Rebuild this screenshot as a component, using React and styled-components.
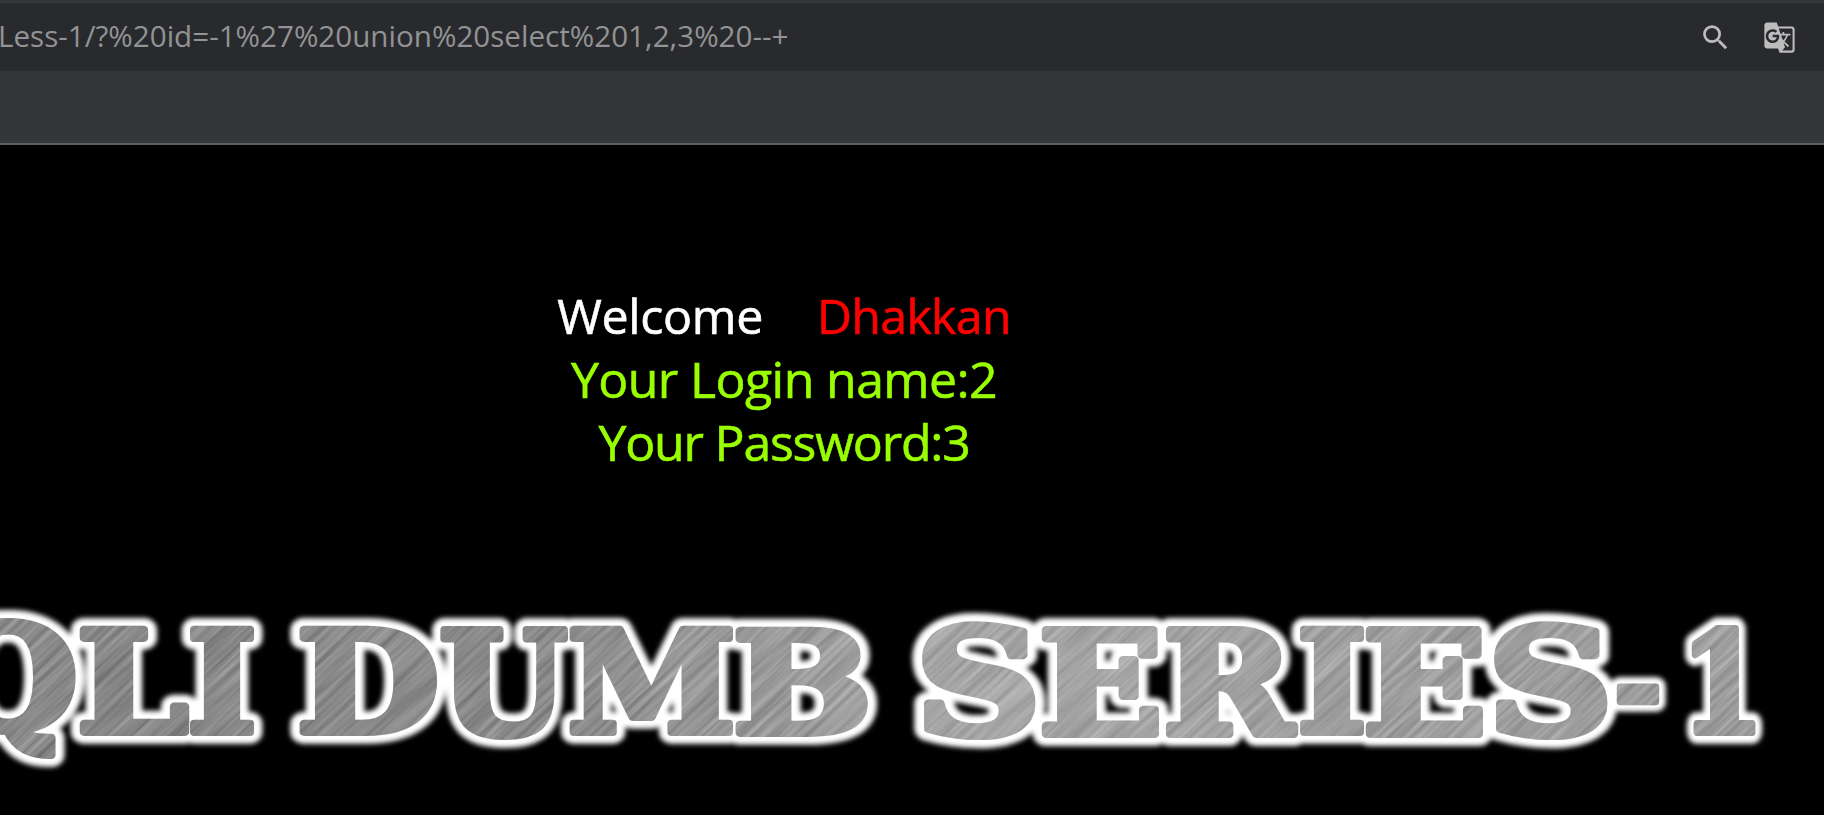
import React from 'react';
import styled, { createGlobalStyle } from 'styled-components';
import { MdSearch, MdGTranslate } from 'react-icons/md';

const GlobalStyle = createGlobalStyle`
  body {
    margin: 0;
    background: #000;
    font-family: "Open Sans", "Noto Sans", sans-serif;
  }
`;

const Screen = styled.div`
  width: 1824px;
  height: 815px;
  overflow: hidden;
  display: flex;
  flex-direction: column;
  background: #000;
`;

const BrowserChrome = styled.header`
  box-sizing: border-box;
  flex: none;
  height: 145px;
  padding-top: 3px;
  background: #35363a;
  border-bottom: 2px solid #5f6063;
`;

const AddressBar = styled.div`
  box-sizing: border-box;
  height: 68px;
  padding-right: 28px;
  display: flex;
  align-items: center;
  justify-content: space-between;
  background: #292a2d;
`;

const Url = styled.span`
  margin-left: -2px;
  padding-bottom: 2px;
  font-size: 29.6px;
  line-height: 64px;
  white-space: pre;
  color: #929394;
`;

const Actions = styled.div`
  display: flex;
  align-items: center;
  gap: 31px;
  color: #bdbdbd;
`;

const Page = styled.main`
  flex: 1;
  display: flex;
  flex-direction: column;
`;

const Message = styled.section`
  width: 1568px;
  height: 306px;
  margin-top: 139px;
  display: flex;
  flex-direction: column;
  align-items: center;
`;

const Line = styled.div`
  display: flex;
  gap: 54px;
  height: 63.5px;
  font-size: ${(p) => p.$size}px;
  line-height: 63.5px;
  letter-spacing: ${(p) => p.$spacing || 0}px;
  white-space: pre;
  color: #99ff00;
  -webkit-text-stroke: 0.6px;
`;

const Word = styled.span`
  color: ${(p) => p.$color};
  letter-spacing: ${(p) => p.$spacing}px;
`;

const BannerArt = styled.svg`
  display: block;
  flex: none;
`;

const Lettering = styled.g`
  font-family: "DejaVu Serif", serif;
  font-weight: bold;
  font-size: 143px;
  stroke-linejoin: round;
`;

/* Glyph extents in thousandths of the em: left, right, above and below baseline */
const EXTENTS = {
  Q: [36, 828, 742, 186],
  L: [45, 682, 729, 0],
  I: [45, 422, 729, 0],
  D: [45, 822, 729, 0],
  U: [31, 851, 729, 14],
  M: [36, 1068, 729, 0],
  B: [45, 795, 729, 0],
  S: [60, 670, 742, 14],
  E: [45, 715, 729, 0],
  R: [45, 838, 729, 0],
  '-': [45, 370, 340, -194],
  1: [112, 612, 742, 0],
};

/* Letter and its box on the banner: left, right, top, bottom */
const LETTERS = [
  ['Q', -60, 75, 619, 760],
  ['L', 80, 189, 626, 736],
  ['I', 190, 254, 626, 736],
  ['D', 300, 436, 626, 736],
  ['U', 440, 568, 626, 740],
  ['M', 569, 734, 626, 736],
  ['B', 736, 868, 626, 737],
  ['S', 922, 1036, 621, 740],
  ['E', 1042, 1159, 626, 738],
  ['R', 1166, 1298, 626, 738],
  ['I', 1300, 1364, 626, 736],
  ['E', 1366, 1483, 626, 738],
  ['S', 1494, 1608, 621, 740],
  ['-', 1615, 1661, 682, 707],
  ['1', 1690, 1758, 625, 736],
];

const EM = 143;
const EDGE = 4;

function fit([char, left, right, top, bottom]) {
  const [l, r, a, d] = EXTENTS[char].map((v) => (v * EM) / 1000);
  const sx = (right - left - EDGE * 2) / (r - l);
  const sy = (bottom - top - EDGE * 2) / (a + d);
  const x = left + EDGE - l * sx;
  const y = top + EDGE + a * sy;
  return `translate(${x.toFixed(2)} ${y.toFixed(2)}) scale(${sx.toFixed(4)} ${sy.toFixed(4)})`;
}

function Banner() {
  return (
    <BannerArt width="1824" height="225" viewBox="0 590 1824 225">
      <defs>
        <filter id="glow" filterUnits="userSpaceOnUse" x="-80" y="590" width="1904" height="225">
          <feGaussianBlur stdDeviation="2.8" />
        </filter>
        <filter id="brushed" filterUnits="userSpaceOnUse" x="-800" y="-200" width="2800" height="2600" colorInterpolationFilters="sRGB">
          <feTurbulence type="fractalNoise" baseFrequency="0.009 0.22" numOctaves="3" seed="4" />
          <feColorMatrix values="0.3 0 0 0 0.42  0.3 0 0 0 0.42  0.3 0 0 0 0.42  0 0 0 0 1" />
        </filter>
        <linearGradient id="sheen" gradientUnits="userSpaceOnUse" x1="0" y1="0" x2="1824" y2="0">
          <stop offset="0" stopColor="#000" stopOpacity="0.06" />
          <stop offset="0.28" stopColor="#000" stopOpacity="0.06" />
          <stop offset="0.4" stopColor="#fff" stopOpacity="0.05" />
          <stop offset="0.54" stopColor="#fff" stopOpacity="0.2" />
          <stop offset="0.7" stopColor="#fff" stopOpacity="0.13" />
          <stop offset="1" stopColor="#fff" stopOpacity="0.08" />
        </linearGradient>
        <mask id="face" maskUnits="userSpaceOnUse" x="-80" y="590" width="1904" height="225">
          <use href="#letters" fill="#fff" stroke="#fff" strokeWidth="8" />
        </mask>
      </defs>
      <g fill="#fff" stroke="#fff" strokeWidth="24" filter="url(#glow)">
        <Lettering id="letters">
          {LETTERS.map((letter, i) => (
            <text key={i} transform={fit(letter)}>{letter[0]}</text>
          ))}
        </Lettering>
      </g>
      <g mask="url(#face)">
        <g transform="rotate(-43)">
          <rect x="-800" y="-200" width="2800" height="2600" filter="url(#brushed)" />
        </g>
        <rect x="0" y="590" width="1824" height="225" fill="url(#sheen)" />
      </g>
    </BannerArt>
  );
}

export default function App() {
  return (
    <>
      <GlobalStyle />
      <Screen>
        <BrowserChrome>
          <AddressBar>
            <Url>Less-1/?%20id=-1%27%20union%20select%201,2,3%20--+</Url>
            <Actions>
              <MdSearch size={33} />
              <MdGTranslate size={33} />
            </Actions>
          </AddressBar>
        </BrowserChrome>
        <Page>
          <Message>
            <Line $size={48.3}>
              <Word $color="#fff" $spacing={-0.3}>Welcome</Word>
              <Word $color="#f00" $spacing={-0.7}>Dhakkan</Word>
            </Line>
            <Line $size={50} $spacing={-0.6}>Your Login name:2</Line>
            <Line $size={50} $spacing={-1.2}>Your Password:3</Line>
          </Message>
          <Banner />
        </Page>
      </Screen>
    </>
  );
}
